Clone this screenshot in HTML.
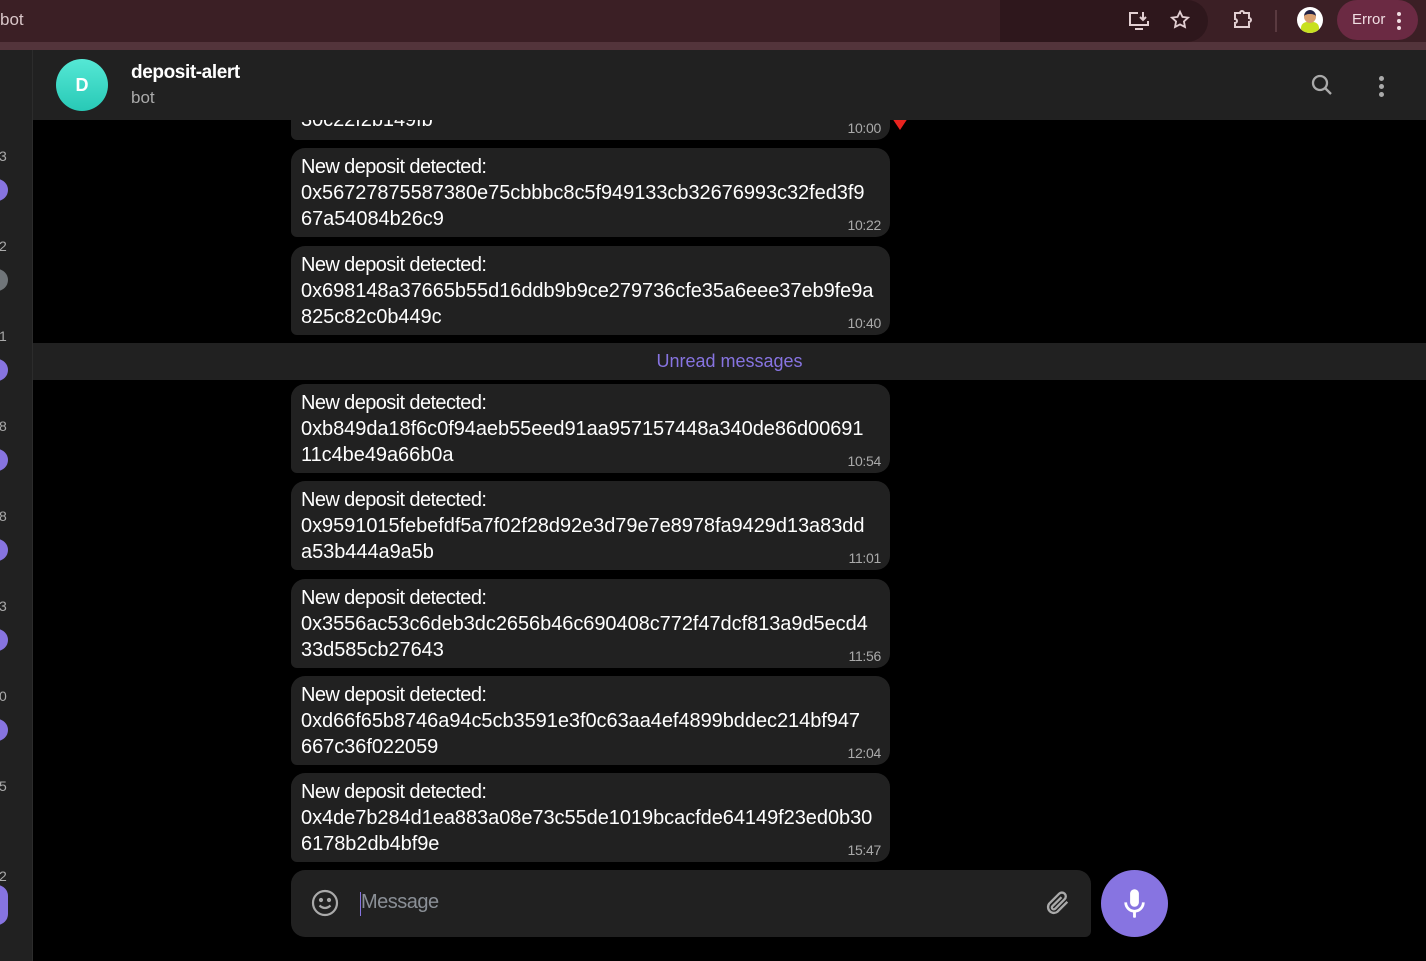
<!DOCTYPE html>
<html><head><meta charset="utf-8"><style>
*{margin:0;padding:0;box-sizing:border-box}
body{width:1426px;height:961px;overflow:hidden;background:#000;font-family:"Liberation Sans",sans-serif;position:relative;color:#fff}
.chrome{position:absolute;left:0;top:0;width:1426px;height:42px;background:#3b1f25}
.strip{position:absolute;left:0;top:42px;width:1426px;height:8px;background:#53343b}
.side{position:absolute;left:0;top:50px;width:33px;height:911px;background:#212121;border-right:1px solid #2c2c2c}
.hdr{position:absolute;left:33px;top:50px;width:1393px;height:70px;background:#212121}
.b{position:absolute;left:291px;width:599px;height:89px;background:#212121;border-radius:14px 14px 14px 6px}
.b .t{position:absolute;left:10px;top:6px;font-size:20px;line-height:26px;letter-spacing:-0.05px;white-space:nowrap}
.b .t span{letter-spacing:-0.6px}
.b .tm{position:absolute;right:9px;bottom:4px;font-size:14px;color:#aaa;letter-spacing:-0.3px}
.num{position:absolute;left:-1px;font-size:14px;color:#aaa}
.dot{position:absolute;left:-14px;width:22px;height:22px;border-radius:50%;background:#8774e1}
</style></head><body>
<div class="chrome"></div>
<div style="position:absolute;left:0;top:10px;font-size:17px;color:#d9c6c9">bot</div>
<div style="position:absolute;left:1000px;top:0;width:208px;height:42px;background:#2e171c;border-radius:0 21px 21px 0"></div>
<svg style="position:absolute;left:1128px;top:10px" width="24" height="22" viewBox="0 0 24 22" fill="none" stroke="#e2cfd2" stroke-width="2"><path d="M10 3H2v12h18v-4M7 19h8M15 2v8m-3-3l3 3 3-3"/></svg>
<svg style="position:absolute;left:1169px;top:9px" width="22" height="22" viewBox="0 0 24 24" fill="none" stroke="#e2cfd2" stroke-width="2"><path d="M12 3l2.7 5.6 6.1.8-4.5 4.2 1.1 6L12 16.8 6.6 19.6l1.1-6L3.2 9.4l6.1-.8z"/></svg>
<svg style="position:absolute;left:1231px;top:8px" width="24" height="24" viewBox="0 0 24 24" fill="none" stroke="#e2cfd2" stroke-width="2"><path d="M4 5h5a2 2 0 014 0h5v5a2 2 0 010 4v5H4v-4a2 2 0 000-4z"/></svg>
<div style="position:absolute;left:1275px;top:10px;width:2px;height:22px;background:#5a3a40"></div>
<div style="position:absolute;left:1297px;top:7px;width:26px;height:26px;border-radius:50%;background:#fff;overflow:hidden"><div style="position:absolute;left:4px;top:15px;width:18px;height:12px;background:#c8e020;border-radius:6px 6px 0 0"></div><div style="position:absolute;left:7px;top:3px;width:12px;height:13px;background:#d9a070;border-radius:50%;border-top:4px solid #224"></div></div>
<div style="position:absolute;left:1337px;top:0;width:81px;height:40px;background:#6b2a43;border-radius:20px"></div>
<div style="position:absolute;left:1352px;top:11px;font-size:15px;color:#f0dde2">Error</div>
<div style="position:absolute;left:1397px;top:12px;width:4px;height:4px;border-radius:50%;background:#f0dde2;box-shadow:0 7px 0 #f0dde2,0 14px 0 #f0dde2"></div>
<div class="strip"></div>
<div class="side">
<div class="num" style="top:98px">3</div><div class="dot" style="top:129px"></div>
<div class="num" style="top:188px">2</div><div class="dot" style="top:219px;background:#707579"></div>
<div class="num" style="top:278px">1</div><div class="dot" style="top:309px"></div>
<div class="num" style="top:368px">8</div><div class="dot" style="top:399px"></div>
<div class="num" style="top:458px">8</div><div class="dot" style="top:489px"></div>
<div class="num" style="top:548px">3</div><div class="dot" style="top:579px"></div>
<div class="num" style="top:638px">0</div><div class="dot" style="top:669px"></div>
<div class="num" style="top:728px">5</div>
<div class="num" style="top:818px">2</div><div class="dot" style="top:835px;width:22px;height:40px;border-radius:20px"></div>
</div>

<div class="b" style="top:100px;height:40px;border-radius:0 0 14px 6px"><div class="t" style="top:7px">30c22f2b149fb</div><div class="tm">10:00</div></div>
<div style="position:absolute;left:892px;top:118px;width:0;height:0;border-left:8px solid transparent;border-right:8px solid transparent;border-top:12px solid #e8231f"></div>

<div class="hdr">
<div style="position:absolute;left:23px;top:9px;width:52px;height:52px;border-radius:50%;background:linear-gradient(#55e8d5,#28c9b6);text-align:center;line-height:52px;font-size:18px;font-weight:bold">D</div>
<div style="position:absolute;left:98px;top:12px;font-size:19px;font-weight:bold;letter-spacing:-0.4px">deposit-alert</div>
<div style="position:absolute;left:98px;top:38px;font-size:17px;color:#aaa">bot</div>
<svg style="position:absolute;left:1277px;top:23px" width="24" height="24" viewBox="0 0 24 24" fill="none" stroke="#aaa" stroke-width="2.3"><circle cx="10" cy="10" r="7"/><path d="M15 15l6 6"/></svg>
<div style="position:absolute;left:1346px;top:26px;width:5px;height:5px;border-radius:50%;background:#aaa;box-shadow:0 8px 0 #aaa,0 16px 0 #aaa"></div>
</div>

<div class="b" style="top:148px"><div class="t"><span>New deposit detected:</span><br>0x56727875587380e75cbbbc8c5f949133cb32676993c32fed3f9<br>67a54084b26c9</div><div class="tm">10:22</div></div>
<div class="b" style="top:246px"><div class="t"><span>New deposit detected:</span><br>0x698148a37665b55d16ddb9b9ce279736cfe35a6eee37eb9fe9a<br>825c82c0b449c</div><div class="tm">10:40</div></div>
<div style="position:absolute;left:33px;top:343px;width:1393px;height:37px;background:#212121;text-align:center;line-height:37px;font-size:18px;color:#8774e1">Unread messages</div>
<div class="b" style="top:384px"><div class="t"><span>New deposit detected:</span><br>0xb849da18f6c0f94aeb55eed91aa957157448a340de86d00691<br>11c4be49a66b0a</div><div class="tm">10:54</div></div>
<div class="b" style="top:481px"><div class="t"><span>New deposit detected:</span><br>0x9591015febefdf5a7f02f28d92e3d79e7e8978fa9429d13a83dd<br>a53b444a9a5b</div><div class="tm">11:01</div></div>
<div class="b" style="top:579px"><div class="t"><span>New deposit detected:</span><br>0x3556ac53c6deb3dc2656b46c690408c772f47dcf813a9d5ecd4<br>33d585cb27643</div><div class="tm">11:56</div></div>
<div class="b" style="top:676px"><div class="t"><span>New deposit detected:</span><br>0xd66f65b8746a94c5cb3591e3f0c63aa4ef4899bddec214bf947<br>667c36f022059</div><div class="tm">12:04</div></div>
<div class="b" style="top:773px"><div class="t"><span>New deposit detected:</span><br>0x4de7b284d1ea883a08e73c55de1019bcacfde64149f23ed0b30<br>6178b2db4bf9e</div><div class="tm">15:47</div></div>

<div style="position:absolute;left:291px;top:870px;width:800px;height:67px;background:#212121;border-radius:14px 14px 6px 14px"></div>
<svg style="position:absolute;left:310px;top:888px" width="30" height="30" viewBox="0 0 30 30" fill="none" stroke="#aaa" stroke-width="2.2"><circle cx="15" cy="15" r="12"/><circle cx="11" cy="12" r="1" fill="#aaa"/><circle cx="19" cy="12" r="1" fill="#aaa"/><path d="M9.5 17.5q5.5 5 11 0"/></svg>
<div style="position:absolute;left:360px;top:892px;width:1px;height:24px;background:#8774e1"></div>
<div style="position:absolute;left:361px;top:891px;font-size:20px;color:#8a8f96;letter-spacing:-0.5px">Message</div>
<svg style="position:absolute;left:1044px;top:889px" width="28" height="28" viewBox="0 0 24 24" fill="none" stroke="#aaa" stroke-width="2"><path d="M20 11l-8.5 8.5a5 5 0 01-7-7L13 4a3.3 3.3 0 014.7 4.7L9.5 17a1.6 1.6 0 01-2.3-2.3L15 7"/></svg>
<div style="position:absolute;left:1101px;top:870px;width:67px;height:67px;border-radius:50%;background:#8774e1"></div>
<svg style="position:absolute;left:1121px;top:887px" width="27" height="33" viewBox="0 0 24 30" fill="#fff"><rect x="8" y="2" width="8" height="16" rx="4"/><path d="M4 14a8 8 0 0016 0" fill="none" stroke="#fff" stroke-width="2.5"/><rect x="10.7" y="21" width="2.6" height="7" rx="1"/></svg>
</body></html>
